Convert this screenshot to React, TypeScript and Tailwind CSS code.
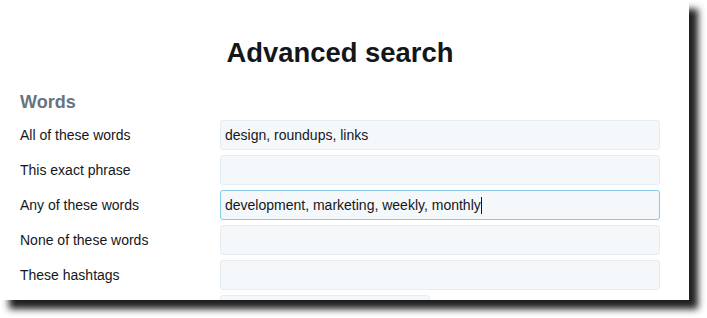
import React from 'react';

interface Field {
  label: string;
  value?: string;
  focused?: boolean;
}

const fields: Field[] = [
  { label: 'All of these words', value: 'design, roundups, links' },
  { label: 'This exact phrase' },
  { label: 'Any of these words', value: 'development, marketing, weekly, monthly', focused: true },
  { label: 'None of these words' },
  { label: 'These hashtags' },
];

function FieldRow({ field }: { field: Field }) {
  return (
    <div className="flex items-center h-[30px]">
      <div className="w-[200px] text-[14px] text-[#14171a]">{field.label}</div>
      <div
        className={
          field.focused
            ? 'w-[440px] h-[30px] flex items-center px-[4px] rounded-[3px] border border-[#88c9ec] bg-[#f5f8fa] text-[14px] text-[#14171a]'
            : 'w-[440px] h-[30px] flex items-center px-[4px] rounded-[3px] border border-[#e6ecf0] bg-[#f5f8fa] text-[14px] text-[#14171a]'
        }
      >
        {field.value}
        {field.focused && <span className="inline-block w-px h-[17px] bg-[#14171a]" />}
      </div>
    </div>
  );
}

export default function App() {
  return (
    <div className="w-[707px] h-[318px] bg-white overflow-hidden font-['Liberation_Sans',Arial,sans-serif]">
      <div className="w-[689px] h-[300px] bg-white overflow-hidden shadow-[9px_9px_7px_rgba(0,0,0,0.88)]">
        <div className="w-[640px] ml-[20px] pt-[37px]">
          <h1 className="text-center text-[27.4px] leading-[32px] font-bold text-[#14171a]">Advanced search</h1>
          <h2 className="mt-[22px] text-[18px] leading-[22px] font-bold text-[#66757f]">Words</h2>
          <div className="mt-[7px] flex flex-col gap-[5px]">
            {fields.map((f) => (
              <FieldRow key={f.label} field={f} />
            ))}
            <div className="flex h-[30px]">
              <div className="w-[200px]" />
              <div className="w-[210px] h-[30px] rounded-[3px] border border-[#e6ecf0] bg-[#f5f8fa]" />
            </div>
          </div>
        </div>
      </div>
    </div>
  );
}
